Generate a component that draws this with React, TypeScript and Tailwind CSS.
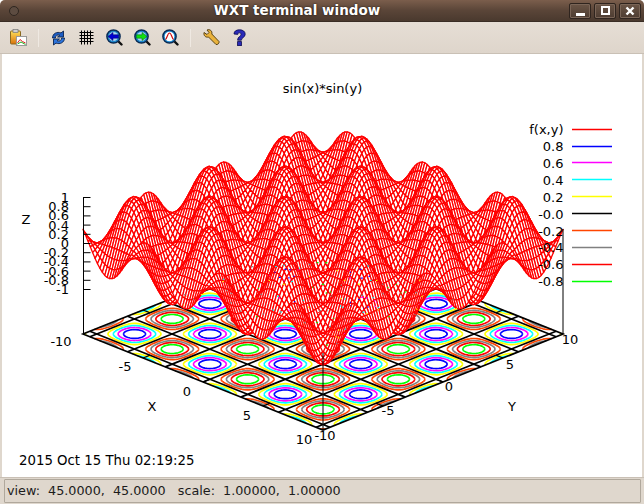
import React from "react";

const F = "'DejaVu Sans', sans-serif";
const px = (x: number, y: number) => 323 + 12 * (x + y);
const py = (x: number, y: number, z: number | null) => 334 + 4.8 * (x - y) + (z === null ? 0 : -91 - 46 * z);
const f = (x: number, y: number) => Math.sin(x) * Math.sin(y);
const r = (n: number) => n.toFixed(1);

function meshStrips(n: number) {
  const v = (i: number) => -10 + (20 * i) / (n - 1);
  const P = (i: number, j: number) => {
    const a = v(i);
    const b = v(j);
    return r(px(a, b)) + " " + r(py(a, b, f(a, b)));
  };
  const strips: string[] = [];
  // Painted from the back corner (x=-10, y=10) to the front corner (x=10, y=-10).
  for (let k = -(n - 2); k <= n - 2; k++) {
    let d = "";
    for (let i = 0; i < n - 1; i++) {
      const j = i - k;
      if (j < 0 || j >= n - 1) continue;
      d += `M${P(i, j)}L${P(i + 1, j)}L${P(i + 1, j + 1)}L${P(i, j + 1)}Z`;
    }
    if (d) strips.push(d);
  }
  return strips;
}

function contourPath(level: number, n: number) {
  let d = "";
  const h = 20 / n;
  const cross = (x1: number, y1: number, v1: number, x2: number, y2: number, v2: number) => {
    const t = (level - v1) / (v2 - v1);
    return [x1 + t * (x2 - x1), y1 + t * (y2 - y1)];
  };
  for (let i = 0; i < n; i++) {
    for (let j = 0; j < n; j++) {
      const x0 = -10 + i * h;
      const y0 = -10 + j * h;
      const x1 = x0 + h;
      const y1 = y0 + h;
      const a = f(x0, y0);
      const b = f(x1, y0);
      const c = f(x1, y1);
      const e = f(x0, y1);
      const pts: number[][] = [];
      if (a < level !== b < level) pts.push(cross(x0, y0, a, x1, y0, b));
      if (b < level !== c < level) pts.push(cross(x1, y0, b, x1, y1, c));
      if (c < level !== e < level) pts.push(cross(x1, y1, c, x0, y1, e));
      if (e < level !== a < level) pts.push(cross(x0, y1, e, x0, y0, a));
      if (pts.length >= 2) {
        d += "M" + r(px(pts[0][0], pts[0][1])) + " " + r(py(pts[0][0], pts[0][1], null));
        d += "L" + r(px(pts[1][0], pts[1][1])) + " " + r(py(pts[1][0], pts[1][1], null));
      }
    }
  }
  return d;
}

// Keeps one short contour segment out of every `step`: the few specks that show through the mesh.
function specks(d: string, step: number) {
  return d
    .split("M")
    .filter((s, i) => s && i % step === 0)
    .map((s) => "M" + s)
    .join("");
}

function gridPath() {
  let d = "";
  for (let k = -3; k <= 3; k++) {
    const v = k * Math.PI;
    d += `M${r(px(v, -10))} ${r(py(v, -10, null))}L${r(px(v, 10))} ${r(py(v, 10, null))}`;
    d += `M${r(px(-10, v))} ${r(py(-10, v, null))}L${r(px(10, v))} ${r(py(10, v, null))}`;
  }
  return d;
}

function tickPath() {
  let d = "";
  for (const v of [-5, 0, 5]) {
    d += `M${r(px(v, -10))} ${r(py(v, -10, null))}L${r(px(v, -9.4))} ${r(py(v, -9.4, null))}`;
    d += `M${r(px(v, 10))} ${r(py(v, 10, null))}L${r(px(v, 9.4))} ${r(py(v, 9.4, null))}`;
    d += `M${r(px(10, v))} ${r(py(10, v, null))}L${r(px(9.4, v))} ${r(py(9.4, v, null))}`;
    d += `M${r(px(-10, v))} ${r(py(-10, v, null))}L${r(px(-9.4, v))} ${r(py(-9.4, v, null))}`;
  }
  return d;
}

const LEVELS: [string, number, string][] = [
  ["0.8", 0.8, "#0000ff"],
  ["0.6", 0.6, "#ff00ff"],
  ["0.4", 0.4, "#00ffff"],
  ["0.2", 0.2, "#ffff00"],
  ["-0.0", 0, "#000000"],
  ["-0.2", -0.2, "#ff4500"],
  ["-0.4", -0.4, "#808080"],
  ["-0.6", -0.6, "#ff0000"],
  ["-0.8", -0.8, "#00ff00"],
];

const ZT = ["1", "0.8", "0.6", "0.4", "0.2", "0", "-0.2", "-0.4", "-0.6", "-0.8", "-1"];
const LEGEND_Y = [146, 162, 179, 196, 213, 230, 247, 264, 281];

function Plot() {
  const strips = React.useMemo(() => meshStrips(100), []);
  const contours = React.useMemo(
    () => LEVELS.filter((l) => l[1] !== 0).map((l) => ({ c: l[2], d: contourPath(l[1], 160) })),
    []
  );
  const grid = React.useMemo(gridPath, []);
  const ticks = React.useMemo(tickPath, []);
  const T = (x: number, y: number, s: string, anchor: "start" | "middle" | "end" = "middle", size = 13) => (
    <text key={s + x + y} x={x} y={y} textAnchor={anchor} fontSize={size} fill="#000" fontFamily={F}>
      {s}
    </text>
  );
  return (
    <svg width={640} height={423} viewBox="2 54 640 423" className="block">
      {contours.map((c) => (
        <path key={c.c} d={c.d} stroke={c.c} strokeWidth={1.7} fill="none" />
      ))}
      <path d={grid} stroke="#000" strokeWidth={1.7} fill="none" />
      <path d="M83 334L323 430L563 334L323 238Z" stroke="#000" strokeWidth={1.7} fill="none" />
      <path d={ticks} stroke="#000" strokeWidth={1.2} fill="none" />
      <path d="M323 238V161" stroke="#000" strokeWidth={1} fill="none" />
      {strips.map((d, i) => (
        <path key={i} d={d} stroke="#ff0000" strokeWidth={1.3} fill="#fff" strokeLinejoin="round" />
      ))}
      <clipPath id="spk">
        <path d="M160 262H490V320H400L323 350L245 320H160Z" />
      </clipPath>
      {contours.map((c) => (
        <path key={c.c + "s"} d={specks(c.d, 17)} stroke={c.c} strokeWidth={1.1} fill="none" clipPath="url(#spk)" />
      ))}
      <path d="M83.5 334V197M323 430V353M563 334V229" stroke="#000" strokeWidth={1} fill="none" />
      {ZT.map((s, i) => (
        <path key={s} d={`M83.5 ${197.5 + i * 9.2}h7`} stroke="#000" strokeWidth={1} fill="none" />
      ))}
      {T(322.5, 93, "sin(x)*sin(y)")}
      {T(563.5, 134, "f(x,y)", "end")}
      {LEVELS.map((l, i) => T(563.5, 151 + i * 16.9, l[0], "end"))}
      <path d="M572 129.5H612" stroke="#ff0000" strokeWidth={1.3} fill="none" />
      {LEVELS.map((l, i) => (
        <path key={l[0]} d={`M572 ${LEGEND_Y[i] + 0.5}H612`} stroke={l[2]} strokeWidth={1.3} fill="none" />
      ))}
      {ZT.map((s, i) => T(69, 202 + i * 9.2, s, "end"))}
      {T(26, 224, "Z")}
      {T(152, 411, "X")}
      {T(512, 411, "Y")}
      {T(61, 346, "-10")}
      {T(125, 371, "-5")}
      {T(187, 396, "0")}
      {T(247, 420, "5")}
      {T(304, 444, "10")}
      {T(325, 440, "-10")}
      {T(388, 415, "-5")}
      {T(449, 391, "0")}
      {T(510, 369, "5")}
      {T(570, 344, "10")}
      {T(19, 465, "2015 Oct 15 Thu 02:19:25", "start", 13.3)}
    </svg>
  );
}

function Zoomer({ children }: { children: React.ReactNode }) {
  return (
    <svg width={17} height={17} viewBox="0 0 17 17">
      <path d="M12 12L15.5 15.5" stroke="#111" strokeWidth={2.4} strokeLinecap="round" />
      <circle cx={7.5} cy={7.5} r={6.6} fill="#1c86cc" stroke="#0b2c55" strokeWidth={1.5} />
      {children}
    </svg>
  );
}

function Clip() {
  return (
    <svg width={17} height={17} viewBox="0 0 17 17">
      <defs>
        <linearGradient id="cl" x1="0" y1="0" x2="0" y2="1">
          <stop offset="0" stopColor="#ffe15a" />
          <stop offset="1" stopColor="#d9720c" />
        </linearGradient>
      </defs>
      <rect x={0.5} y={2} width={10} height={13} rx={1} fill="url(#cl)" stroke="#8a6a20" />
      <rect x={3} y={0.5} width={5} height={3} fill="#cfcfcf" stroke="#777" strokeWidth={0.7} />
      <rect x={6.5} y={7.5} width={10} height={9} fill="#fff" stroke="#999" />
      <path d="M7.5 14L10 10.5L12.5 12.5L15.5 14" stroke="#e02020" fill="none" />
      <path d="M7.5 15L11 13L15.5 15.5" stroke="#20b020" fill="none" />
    </svg>
  );
}

function Refresh() {
  return (
    <svg width={15} height={16} viewBox="0 0 15 15">
      <path d="M1.5 7.5C1.5 3 6 0.8 10 2.4L12.5 0.5V6.5H6.5L8.8 4.6C6.4 3.8 4.6 5.2 4.4 7.5Z" fill="#1c5cc4" stroke="#0a2450" strokeWidth={0.9} />
      <path d="M13.5 7.5C13.5 12 9 14.2 5 12.6L2.5 14.5V8.5H8.5L6.2 10.4C8.6 11.2 10.4 9.8 10.6 7.5Z" fill="#2c74dc" stroke="#0a2450" strokeWidth={0.9} />
    </svg>
  );
}

function Grid() {
  return (
    <svg width={15} height={15} viewBox="0 0 15 15">
      <path d="M2.5 0.5V14.5M5.5 0.5V14.5M8.5 0.5V14.5M11.5 0.5V14.5M0.5 2.5H14.5M0.5 5.5H14.5M0.5 8.5H14.5M0.5 11.5H14.5" stroke="#000" strokeWidth={1} fill="none" />
    </svg>
  );
}

function Wrench() {
  return (
    <svg width={17} height={17} viewBox="0 0 17 17">
      <path d="M1 3.5L4 5.5L6 3.5L4 1C7 -0.2 9.5 2 8.8 5L16 12.5C16.6 14 14.5 16.2 13 15.5L5.5 8C2.5 8.8 0.4 6.4 1 3.5Z" fill="#e9b23c" stroke="#5a4416" strokeWidth={1} />
    </svg>
  );
}

function Help() {
  return (
    <svg width={13} height={18} viewBox="0 0 13 18">
      <path d="M1 5C1 2 3.5 0.8 6.5 0.8C10 0.8 12.2 2.6 12.2 5.2C12.2 8.6 8.4 8.4 8.4 11.2H4.6C4.6 7.4 8 7.6 8 5.4C8 4.4 7.4 3.8 6.4 3.8C5.4 3.8 4.8 4.4 4.8 5.4Z" fill="#2a2ab8" stroke="#0c0c50" strokeWidth={0.8} />
      <rect x={4.6} y={12.6} width={3.8} height={4} fill="#2a2ab8" stroke="#0c0c50" strokeWidth={0.8} />
    </svg>
  );
}

function WinBtn({ children }: { children: React.ReactNode }) {
  return (
    <div className="w-[22px] h-[16px] rounded-[2px] border border-[#2f241e] bg-gradient-to-b from-[#6b5546] to-[#4d3c31] shadow-[inset_0_0_0_1px_#7a6557] flex items-center justify-center">
      {children}
    </div>
  );
}

function Sep() {
  return <div className="w-[1px] h-[18px] bg-[#c9c0b5] border-r border-[#efe9e2]" />;
}

export default function App() {
  return (
    <div className="w-[644px] h-[504px] flex flex-col bg-[#dfd7cd] overflow-hidden rounded-t-[5px]">
      <div className="h-[22px] shrink-0 relative flex items-center justify-between bg-gradient-to-b from-[#7b5e4c] via-[#5a4538] to-[#4a392e] border-b border-[#3a2d25] pl-[9px] pr-[3px]">
        <div className="w-[10px] h-[10px] rounded-full border border-[#2f2620] bg-[#5d4c41]" />
        <div className="absolute left-0 right-[50px] top-0 h-full flex items-center justify-center">
          <span
            className="text-white font-bold text-[13.5px] [text-shadow:0_0_2px_#1a120c]"
            style={{ fontFamily: F }}
          >
            WXT terminal window
          </span>
        </div>
        <div className="flex gap-[3px] relative">
          <WinBtn>
            <div className="w-[9px] h-[3px] bg-white mt-[7px]" />
          </WinBtn>
          <WinBtn>
            <div className="w-[9px] h-[9px] border-2 border-white" />
          </WinBtn>
          <WinBtn>
            <svg width={10} height={10} viewBox="0 0 10 10">
              <path d="M1.5 1.5L8.5 8.5M8.5 1.5L1.5 8.5" stroke="#fff" strokeWidth={2.4} />
            </svg>
          </WinBtn>
        </div>
      </div>
      <div className="h-[32px] shrink-0 flex items-center pl-[10px] bg-gradient-to-b from-[#e6ded5] to-[#ded5cb] border-b border-[#c9c0b5]">
        <Clip />
        <div className="ml-[11px]"><Sep /></div>
        <div className="ml-[12px]"><Refresh /></div>
        <div className="ml-[13px]"><Grid /></div>
        <div className="ml-[12px]">
          <Zoomer>
            <circle cx={7.5} cy={7.5} r={4.6} fill="#a8d4f0" />
            <path d="M2 7.5L7 3.4V5.8H12.6V9.2H7V11.6Z" fill="#0000d0" stroke="#000060" strokeWidth={0.5} />
          </Zoomer>
        </div>
        <div className="ml-[11px]">
          <Zoomer>
            <circle cx={7.5} cy={7.5} r={4.6} fill="#a8d4f0" />
            <path d="M13 7.5L8 3.4V5.8H2.4V9.2H8V11.6Z" fill="#10e010" stroke="#006000" strokeWidth={0.5} />
          </Zoomer>
        </div>
        <div className="ml-[11px]">
          <Zoomer>
            <circle cx={7.5} cy={7.5} r={4.8} fill="#fff" />
            <path d="M3.5 10.5C5 10 5.5 4 7.5 4C9.5 4 10 10 11.5 10.5" stroke="#d01010" strokeWidth={1.2} fill="none" />
          </Zoomer>
        </div>
        <div className="ml-[11px]"><Sep /></div>
        <div className="ml-[12px]"><Wrench /></div>
        <div className="ml-[13px]"><Help /></div>
      </div>
      <div className="flex-1 min-h-0 pl-[2px] pr-[2px]">
        <div className="bg-white h-full overflow-hidden">
          <Plot />
        </div>
      </div>
      <div className="h-[27px] shrink-0 pt-[1px] pb-[1px] pl-[4px] pr-[3px] border-t border-[#c9c0b5]">
        <div
          className="h-full border border-[#b0a89c] rounded-[1px] flex items-center pl-[2px] text-[12.75px] text-[#1c1c1c] whitespace-pre"
          style={{ fontFamily: F }}
        >
          {"view:  45.0000,  45.0000   scale:  1.00000,  1.00000"}
        </div>
      </div>
    </div>
  );
}
